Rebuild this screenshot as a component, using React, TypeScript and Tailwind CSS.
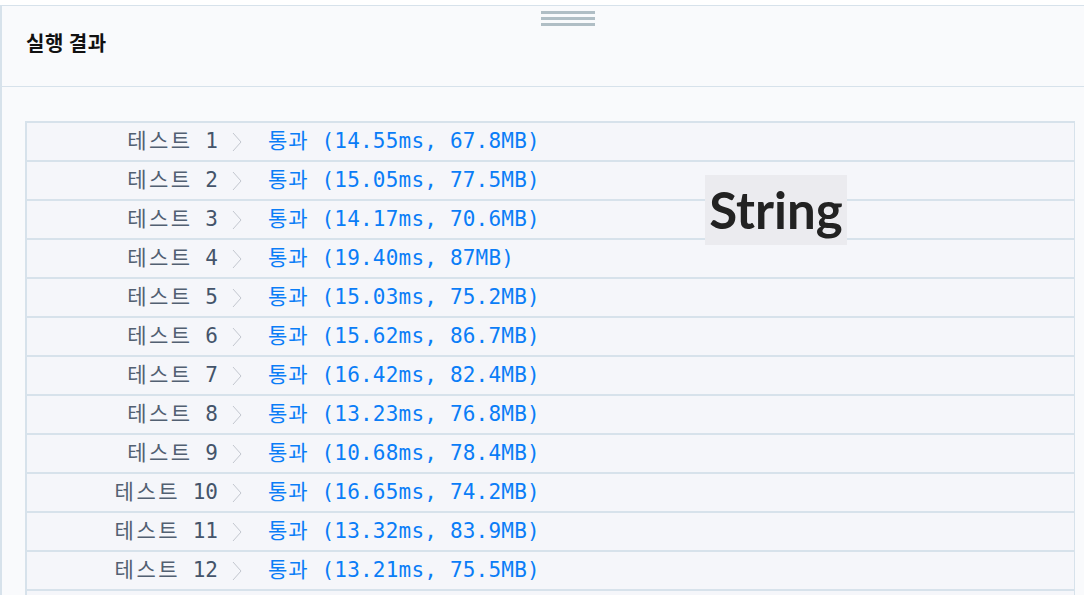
const results = [
  { n: 1, time: "14.55ms", mem: "67.8MB" },
  { n: 2, time: "15.05ms", mem: "77.5MB" },
  { n: 3, time: "14.17ms", mem: "70.6MB" },
  { n: 4, time: "19.40ms", mem: "87MB" },
  { n: 5, time: "15.03ms", mem: "75.2MB" },
  { n: 6, time: "15.62ms", mem: "86.7MB" },
  { n: 7, time: "16.42ms", mem: "82.4MB" },
  { n: 8, time: "13.23ms", mem: "76.8MB" },
  { n: 9, time: "10.68ms", mem: "78.4MB" },
  { n: 10, time: "16.65ms", mem: "74.2MB" },
  { n: 11, time: "13.32ms", mem: "83.9MB" },
  { n: 12, time: "13.21ms", mem: "75.5MB" },
  { n: 13, time: "14.02ms", mem: "71.3MB" },
];

const mono = { fontFamily: '"DejaVu Sans Mono", "Noto Sans CJK KR", monospace' };

const Chevron = () => (
  <svg width="10" height="20" viewBox="0 0 10 20" className="shrink-0">
    <polyline
      points="1,1 9,10 1,19"
      fill="none"
      stroke="#c3c7cf"
      strokeWidth="1"
    />
  </svg>
);

const App = () => {
  return (
    <div className="w-[1084px] h-[595px] overflow-hidden bg-white relative">
      <div className="mt-[5px] h-[590px] bg-[#f9fafc] border-t border-l-2 border-[#d7e2eb] flex flex-col">
        <div className="relative h-[81px] shrink-0 border-b border-[#d7e2eb] flex items-center pl-[24px]">
          <div className="absolute left-[539px] top-[5px] flex flex-col gap-[3px]">
            <div className="w-[54px] h-[3px] bg-[#b0bec5]" />
            <div className="w-[54px] h-[3px] bg-[#b0bec5]" />
            <div className="w-[54px] h-[3px] bg-[#b0bec5]" />
          </div>
          <h2
            className="text-[20px] font-bold text-[#111] mt-[-7px] tracking-[0.5px]"
            style={{ fontFamily: '"Noto Sans CJK KR", "Noto Sans", sans-serif' }}
          >
            실행 결과
          </h2>
        </div>
        <div className="pt-[34px] pl-[23px] pr-[9px]">
          <div className="border-t-2 border-l-2 border-r border-[#d7e2eb] bg-[#f5f6fa]">
            {results.map((r) => (
              <div
                key={r.n}
                className="h-[39px] border-b-2 border-[#d7e2eb] flex items-center text-[21px] leading-none"
                style={mono}
              >
                <div className="w-[191px] shrink-0 flex justify-end text-[#526072] whitespace-pre">
                  <span className="tracking-[2.5px]">테스트</span>
                  <span> </span>
                  <span className="text-[#44546a]">{r.n}</span>
                </div>
                <div className="ml-[14px] mr-[26px] flex items-center">
                  <Chevron />
                </div>
                <div className="text-[#0a7df7] whitespace-pre tracking-[0.2px]">
                  <span className="tracking-[1px]">통과</span> ({r.time}, {r.mem})
                </div>
              </div>
            ))}
          </div>
        </div>
      </div>
      <div
        className="absolute left-[705px] top-[175px] w-[142px] h-[70px] bg-[#ebebef] flex items-center justify-center text-[51px] font-bold text-[#222]"
        style={{ fontFamily: 'Lato, "Noto Sans", sans-serif' }}
      >
        String
      </div>
    </div>
  );
};

export default App;
